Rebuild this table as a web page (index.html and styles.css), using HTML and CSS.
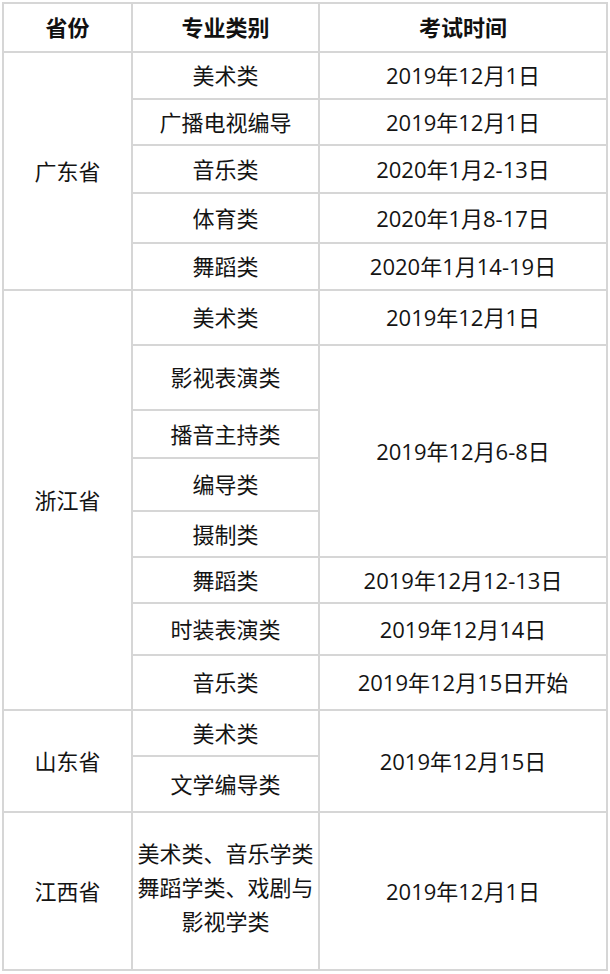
FILE: index.html
```html
<!DOCTYPE html>
<html lang="zh-CN">
<head>
<meta charset="utf-8">
<title>考试时间</title>
<link rel="stylesheet" href="styles.css">
</head>
<body>
<div class="sheet">
  <div class="cell head">省份</div>
  <div class="cell head">专业类别</div>
  <div class="cell head">考试时间</div>

  <div class="cell span5">广东省</div>
  <div class="cell">美术类</div>
  <div class="cell">2019年12月1日</div>
  <div class="cell">广播电视编导</div>
  <div class="cell">2019年12月1日</div>
  <div class="cell">音乐类</div>
  <div class="cell">2020年1月2-13日</div>
  <div class="cell">体育类</div>
  <div class="cell">2020年1月8-17日</div>
  <div class="cell">舞蹈类</div>
  <div class="cell">2020年1月14-19日</div>

  <div class="cell span8">浙江省</div>
  <div class="cell">美术类</div>
  <div class="cell">2019年12月1日</div>
  <div class="cell">影视表演类</div>
  <div class="cell span4">2019年12月6-8日</div>
  <div class="cell">播音主持类</div>
  <div class="cell">编导类</div>
  <div class="cell">摄制类</div>
  <div class="cell">舞蹈类</div>
  <div class="cell">2019年12月12-13日</div>
  <div class="cell">时装表演类</div>
  <div class="cell">2019年12月14日</div>
  <div class="cell">音乐类</div>
  <div class="cell">2019年12月15日开始</div>

  <div class="cell span2">山东省</div>
  <div class="cell">美术类</div>
  <div class="cell span2">2019年12月15日</div>
  <div class="cell">文学编导类</div>

  <div class="cell">江西省</div>
  <div class="cell multi">美术类、音乐学类<br>舞蹈学类、戏剧与<br>影视学类</div>
  <div class="cell">2019年12月1日</div>
</div>
</body>
</html>
```

FILE: styles.css
```css
html, body {
  margin: 0;
  padding: 0;
  background: #ffffff;
}

body {
  font-family: "Open Sans", "Noto Sans CJK SC", sans-serif;
  font-size: 22px;
  color: #141414;
}

.sheet {
  display: grid;
  grid-template-columns: 127px 185px 286px;
  grid-template-rows: 47px 45px 44px 46px 48px 45px 53px 63px 46px 51px 44px 44px 50px 53px 44px 54px 156px;
  gap: 2px;
  padding: 2px;
  margin: 2px 0 0 2px;
  width: max-content;
  background: #d6d6d6;
}

.cell {
  background: #ffffff;
  display: flex;
  align-items: center;
  justify-content: center;
  text-align: center;
  line-height: 1.2;
}

.head {
  font-weight: bold;
  color: #111111;
}

.span2 { grid-row: span 2; }
.span4 { grid-row: span 4; }
.span5 { grid-row: span 5; }
.span8 { grid-row: span 8; }

.multi {
  line-height: 34px;
  padding-bottom: 8px;
}
```
